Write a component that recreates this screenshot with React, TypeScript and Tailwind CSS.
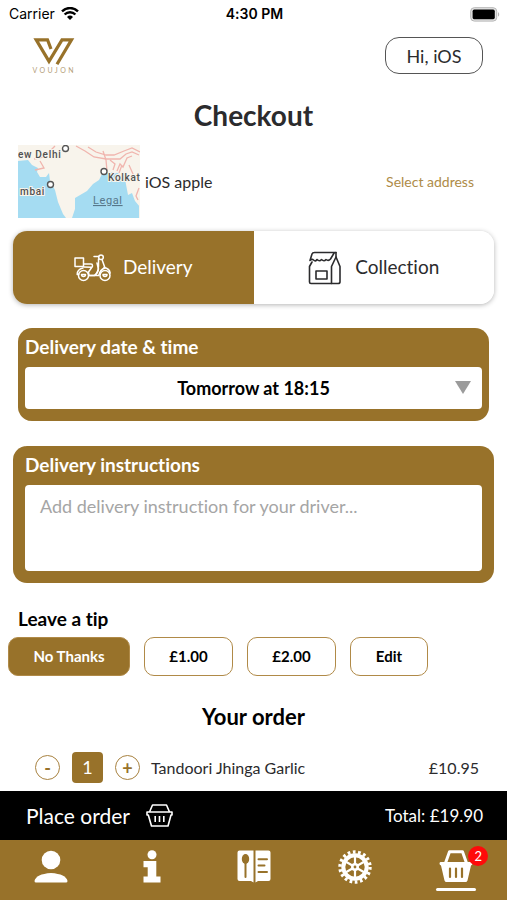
import { useState } from 'react';
import type { ReactNode } from 'react';
import clsx from 'clsx';

const tips = [
  { label: 'No Thanks', width: 'w-[122px]' },
  { label: '£1.00', width: 'w-[89px]' },
  { label: '£2.00', width: 'w-[89px]' },
  { label: 'Edit', width: 'w-[78px]' },
];

const WifiIcon = () => (
  <svg viewBox="0 0 18 14" className="h-[14px] w-[18px]" fill="black">
    <path d="M9 13 6 10a4.300 4.300 0 0 1 6 0z" />
    <path
      d="M3.600 7.500a7.700 7.700 0 0 1 10.800 0M1 4.300a11.400 11.400 0 0 1 16 0"
      fill="none"
      stroke="black"
      strokeWidth="2.400"
    />
  </svg>
);

const BatteryIcon = () => (
  <svg viewBox="0 0 30 15" className="h-[15px] w-[30px]">
    <rect x="0.7" y="0.7" width="26" height="13.4" rx="3.6" fill="#e4e4e4" stroke="#b5b5b5" />
    <rect x="2.6" y="2.6" width="22.2" height="9.6" rx="1.6" fill="black" />
    <path d="M28 5.2c1.6.6 1.6 3.8 0 4.4z" fill="#b5b5b5" />
  </svg>
);

const Logo = () => (
  <svg viewBox="0 0 46 38" className="h-[38px] w-[46px]" role="img" aria-label="Voujon">
    <path
      d="M19 12 15.500 2.800H4.200L17 24.300 30 2.800h9.500L25 27.200"
      fill="none"
      stroke="#98722a"
      strokeWidth="3.200"
    />
    <text x="0.500" y="36.400" fontSize="7" letterSpacing="2.400" fill="#b5a07a" fontFamily="Lato, sans-serif">
      VOUJON
    </text>
  </svg>
);

const MapThumb = () => (
  <svg viewBox="0 0 122 73" className="h-[73px] w-[122px] shrink-0">
    <rect width="122" height="73" fill="#f8f4ec" />
    <path d="M0 16 10 15l4 5 6 3-1 4 3 5 6 0 3-4 1 8 5 9 3 12 5 12 3 4H0z" fill="#a5dcf2" />
    <path d="M54 73l3-9 0-11 12-7 6-7 6-4 3-6 8-2 8 1 4 5 4 1 3 11 6 2 4 9v17z" fill="#a5dcf2" />
    <path d="M107 34l3 16 4-2 3 8 5 6V28z" fill="#f8f4ec" />
    <g fill="none" stroke="#f0b5ae" strokeWidth="1.300">
      <path d="M58 1l9 5 9 6 12 2 14 0 6-5 6-2 7 3M70 2l8 5 10 3 8 0 10-4 8-3 8 4" />
      <path d="M85 6l3 9 1 11M92 15l5 4-2 6M99 26l3-7 3 3 4-9 5-2M101 28l3-8M111 20l4 9-3 5 7-2M121 43l-3 8 2 4M37 1l-7 7-3 0M16 14l9-2M22 16l4 7-9 2" />
    </g>
    <g
      fontFamily="Roboto, sans-serif"
      fontSize="10"
      fontWeight="500"
      letterSpacing="0.700"
      fill="#505050"
      stroke="#f8f4ec"
      strokeWidth="2"
      paintOrder="stroke"
    >
      <text x="0" y="13">ew Delhi</text>
      <text x="90" y="36">Kolkat</text>
      <text x="2" y="50">mbai</text>
    </g>
    <g fill="white" stroke="#555" strokeWidth="1.400">
      <circle cx="47.500" cy="3.500" r="3" />
      <circle cx="86" cy="26.500" r="3" />
      <circle cx="32.500" cy="39.500" r="3" />
    </g>
    <text x="75" y="59" fontFamily="Roboto, sans-serif" fontSize="11" letterSpacing="0.600" fill="#56778a" textDecoration="underline">
      Legal
    </text>
  </svg>
);

const ScooterIcon = () => (
  <svg
    viewBox="0 0 37 28"
    className="h-7 w-[37px]"
    fill="none"
    stroke="currentColor"
    strokeWidth="1.500"
    strokeLinecap="round"
    strokeLinejoin="round"
  >
    <path d="M1 4h8.500v8.500H1z" />
    <path d="M10 10h7q1.500 0 1.500 1.700t-1.500 1.500L10 13" />
    <path d="M9 14Q3 15.500 3.200 20.500h1.500M17.500 13.700l-3 4.300.5 3.500h5.500Q24 19.500 24.500 15L23 9" />
    <path d="M20 2.500h4.500" />
    <circle cx="27" cy="3.200" r="2.300" />
    <path d="M24.500 5v7q0 6-4 9.500M28 5.600l3 8.400q-5 1.500-6.200 7.500h-10" />
    <path d="M30 13.500q5.500 1 6.200 5.500" />
    <circle cx="9.500" cy="21.500" r="5" />
    <path d="M7.500 20.500a2 2 0 1 0 4 0z" />
    <circle cx="31" cy="21.500" r="5" />
    <path d="M29 20.500a2 2 0 1 0 4 0z" />
  </svg>
);

const BagIcon = () => (
  <svg
    viewBox="0 0 33 34"
    className="h-[34px] w-[33px]"
    fill="none"
    stroke="currentColor"
    strokeWidth="1.600"
    strokeLinecap="round"
    strokeLinejoin="round"
  >
    <path d="M28 1.500H6.500Q4.500 1.500 4 3L2 9.500q2-2 3.500-.5 2 2 3.500-.5 2.500 2.500 4.500 0 2.500 2.500 4.500 0 2.500 2 4.500-.5L25.500 3Q26 1.500 28 1.500" />
    <path d="M4 11 1.500 15.500V31q0 1.500 1.500 1.500h27q2 0 2-1.500V15.500L28 6V1.500" />
    <path d="M28 6l-4.500 9.500v17" />
    <path d="M8 20h11v8H8z" />
  </svg>
);

const BasketOutlineIcon = () => (
  <svg viewBox="0 0 27 23" className="h-[23px] w-[27px]" fill="none" stroke="white" strokeWidth="1.600" strokeLinejoin="round">
    <path d="M3.500 8 6.500 1h14L23.500 8" />
    <path d="M1 8h25v3h-1l-3 11H5.500L2.300 11H1z" />
    <path d="M9.200 12v6M13.500 12v6M17.800 12v6" />
  </svg>
);

const UserIcon = () => (
  <svg viewBox="0 0 34 33" className="h-[33px] w-[34px]" fill="white">
    <circle cx="17" cy="10" r="9.300" />
    <path d="M.5 31Q2 24 17 23q15 1 16.500 8 0 1.500-1.500 1.500H2Q.5 32.500.5 31z" />
  </svg>
);

const InfoIcon = () => (
  <svg viewBox="0 0 18 33" className="h-[33px] w-[18px]" fill="white">
    <circle cx="9" cy="4.700" r="4.500" />
    <path d="M.5 11h12.800v15.500h4.200v6H.5v-6h4.200v-9.300H.5z" />
  </svg>
);

const MenuIcon = () => (
  <svg viewBox="0 0 34 33" className="h-[33px] w-[34px]">
    <path
      d="M2.500.5h14V32.500L14 31H2.500q-2 0-2-2V2.500q0-2 2-2zM18.500.5h13q2 0 2 2V29q0 2-2 2H21l-2.500 1.500z"
      fill="white"
    />
    <ellipse cx="8.500" cy="9" rx="3.700" ry="5" fill="#98722a" />
    <path d="M8.500 12v15" stroke="#98722a" strokeWidth="2" strokeLinecap="round" />
    <path d="M21.500 9.200h8.500M21.500 15.600h6M21.500 22h8.500" stroke="#98722a" strokeWidth="2" strokeLinecap="round" />
  </svg>
);

const GearIcon = () => (
  <svg viewBox="0 0 34 34" className="h-[34px] w-[34px]" fill="none" stroke="white">
    <circle cx="17" cy="17" r="15" strokeWidth="3.400" strokeDasharray="2.700 2.536" />
    <circle cx="17" cy="17" r="11.700" strokeWidth="4" />
    <circle cx="17" cy="17" r="3" strokeWidth="2" fill="white" />
    <path d="M17 14V6M17 20v8M14.400 15.500l-7-4M19.600 18.500l7 4M14.400 18.500l-7 4M19.600 15.500l7-4" strokeWidth="2.200" />
    <circle cx="17" cy="17" r="1.400" fill="#98722a" stroke="none" />
  </svg>
);

const BasketIcon = () => (
  <svg viewBox="0 0 34 33" className="h-[33px] w-[34px]">
    <path d="M6.500 13 10.500 1.800h13L27.500 13" fill="none" stroke="white" strokeWidth="3" strokeLinejoin="round" />
    <path
      d="M1.500 12h31q1 0 1 1.500t-1.500 2l-3.500 15Q28 32 26.500 32h-19Q6 32 5.500 30.500L2 15.500Q.5 15 .5 13.500T1.500 12z"
      fill="white"
    />
    <path d="M11 18.500v8.500M17 18.500v8.500M23 18.500v8.500" stroke="#98722a" strokeWidth="2.200" strokeLinecap="round" />
  </svg>
);

const NavButton = ({ label, children }: { label: string; children: ReactNode }) => (
  <button aria-label={label} className="flex flex-1 justify-center pt-[10px]">
    {children}
  </button>
);

const App = () => {
  const [mode, setMode] = useState('Delivery');
  const [tip, setTip] = useState('No Thanks');
  const [quantity, setQuantity] = useState(1);

  return (
    <div className="flex min-h-screen flex-col bg-white font-[Lato,sans-serif] text-[#2b2b2d] [font-variant-ligatures:none]">
      <div className="grid h-7 grid-cols-3 items-center pr-[7px] pl-[9px] font-[Inter,sans-serif] text-sm text-black">
        <div className="flex items-center gap-[6px]">
          <span>Carrier</span>
          <WifiIcon />
        </div>
        <span className="text-center font-semibold">4:30 PM</span>
        <div className="flex justify-end">
          <BatteryIcon />
        </div>
      </div>

      <header className="flex items-start justify-between pt-[9px] pr-6 pl-8">
        <Logo />
        <button className="h-[37px] w-[98px] rounded-[14px] border border-[#555] text-lg leading-none">
          Hi, iOS
        </button>
      </header>

      <main className="flex-1">
        <h1 className="pt-[22px] text-center text-[28px] leading-9 font-bold">Checkout</h1>

        <div className="mt-3 flex items-center px-[18px]">
          <MapThumb />
          <span className="ml-[5px] text-[16px]">iOS apple</span>
          <a href="#address" className="mr-[15px] ml-auto text-sm text-[#ae8b48]">
            Select address
          </a>
        </div>

        <div className="mx-[13px] mt-[13px] flex h-[73px] overflow-hidden rounded-[14px] shadow-[0_1px_5px_rgba(0,0,0,0.3)]">
          <button
            onClick={() => setMode('Delivery')}
            className={clsx(
              'flex flex-1 items-center justify-center gap-3 text-[19px]',
              mode === 'Delivery' ? 'bg-[#98722a] text-white' : 'bg-white',
            )}
          >
            <ScooterIcon />
            Delivery
          </button>
          <button
            onClick={() => setMode('Collection')}
            className={clsx(
              'flex flex-1 items-center justify-center gap-[14px] text-[19px]',
              mode === 'Collection' ? 'bg-[#98722a] text-white' : 'bg-white',
            )}
          >
            <BagIcon />
            Collection
          </button>
        </div>

        <section className="mx-[18px] mt-6 rounded-[14px] bg-[#98722a] px-[7px] pt-[5px] pb-3">
          <label htmlFor="slot" className="block text-[19px] leading-7 font-bold text-white">
            Delivery date &amp; time
          </label>
          <div className="relative mt-[6px]">
            <select
              id="slot"
              className="block h-[42px] w-full appearance-none rounded bg-white px-6 text-center text-[18px] font-bold text-black"
            >
              <option>Tomorrow at 18:15</option>
            </select>
            <svg
              viewBox="0 0 16 13"
              className="pointer-events-none absolute top-[14px] right-[11px] h-[13px] w-4"
              fill="#9b9b9b"
            >
              <path d="M0 0h16L8 13z" />
            </svg>
          </div>
        </section>

        <section className="mx-[13px] mt-[25px] rounded-[14px] bg-[#98722a] px-3 pt-[5px] pb-3">
          <label htmlFor="notes" className="block text-[19px] leading-7 font-bold text-white">
            Delivery instructions
          </label>
          <textarea
            id="notes"
            placeholder="Add delivery instruction for your driver..."
            className="mt-[6px] block h-[86px] w-full resize-none rounded bg-white px-[15px] py-[9px] text-[18px] leading-6 placeholder:text-[#a5a5a5]"
          />
        </section>

        <h2 className="mt-6 px-[18px] text-[19px] leading-6 font-bold text-black">Leave a tip</h2>
        <div className="mt-[6px] flex gap-[14px] px-2">
          {tips.map(({ label, width }) => (
            <button
              key={label}
              onClick={() => setTip(label)}
              className={clsx(
                'h-[39px] rounded-[10px] border border-[#b08a48] text-[15px] font-bold',
                width,
                tip === label ? 'bg-[#98722a] text-white' : 'bg-white text-black',
              )}
            >
              {label}
            </button>
          ))}
        </div>

        <h2 className="mt-[27px] text-center text-[22px] leading-7 font-bold text-black">Your order</h2>
        <div className="mt-[21px] flex items-center pr-7 pb-2 pl-[35px]">
          <button
            aria-label="Remove one"
            onClick={() => setQuantity(Math.max(0, quantity - 1))}
            className="flex size-[25px] items-center justify-center rounded-full border border-[#a88240] text-[18px] leading-none font-bold text-[#98722a]"
          >
            -
          </button>
          <span className="mx-3 flex size-[31px] items-center justify-center rounded bg-[#98722a] text-[18px] text-white">
            {quantity}
          </span>
          <button
            aria-label="Add one"
            onClick={() => setQuantity(quantity + 1)}
            className="flex size-[25px] items-center justify-center rounded-full border border-[#a88240] text-[18px] leading-none font-bold text-[#98722a]"
          >
            +
          </button>
          <span className="ml-[11px] text-[16px]">Tandoori Jhinga Garlic</span>
          <span className="ml-auto text-[16px]">£10.95</span>
        </div>
      </main>

      <footer className="sticky bottom-0">
        <button className="flex h-[49px] w-full items-center bg-black pr-6 pl-[26px] text-white">
          <span className="text-[21px]">Place order</span>
          <span className="ml-4">
            <BasketOutlineIcon />
          </span>
          <span className="ml-auto text-[17px]">Total: £19.90</span>
        </button>
        <nav className="flex h-[60px] bg-[#98722a]">
          <NavButton label="Account">
            <UserIcon />
          </NavButton>
          <NavButton label="Information">
            <InfoIcon />
          </NavButton>
          <NavButton label="Menu">
            <MenuIcon />
          </NavButton>
          <NavButton label="Settings">
            <GearIcon />
          </NavButton>
          <NavButton label="Basket">
            <span className="relative flex flex-col items-center gap-[5px]">
              <BasketIcon />
              <span className="h-[3px] w-10 rounded-full bg-white" />
              <span className="absolute -top-1 left-[32px] flex size-5 items-center justify-center rounded-full bg-[#ff0a0a] text-[13px] leading-none text-white">
                2
              </span>
            </span>
          </NavButton>
        </nav>
      </footer>
    </div>
  );
};

export default App;
